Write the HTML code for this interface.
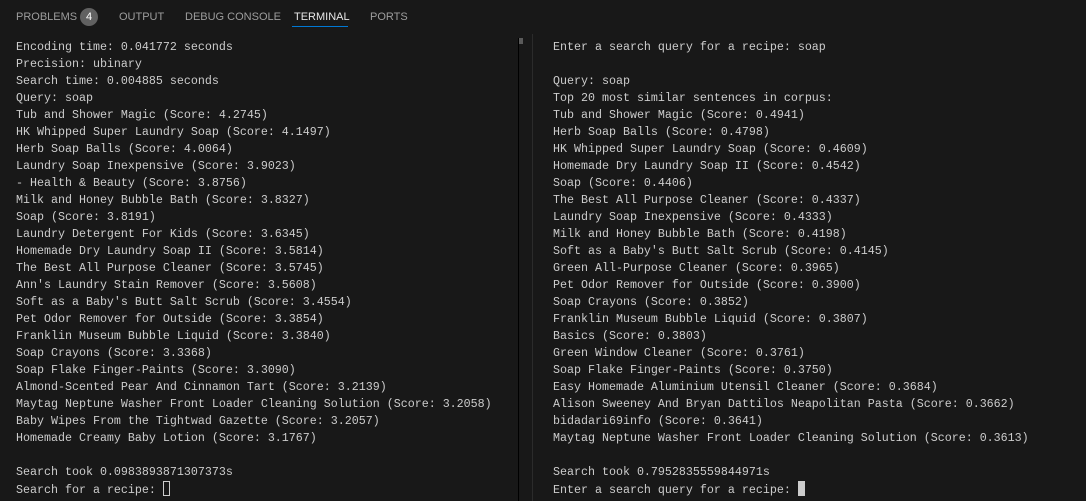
<!DOCTYPE html>
<html><head><meta charset="utf-8"><style>
body{margin:0;width:1086px;height:501px;background:#181818;overflow:hidden;font-family:"Liberation Sans",sans-serif;position:relative}
.tabs{position:absolute;top:0;left:0;height:34px;width:100%}
.tab{position:absolute;top:11px;font-size:11px;color:#9d9d9d;letter-spacing:0}
.badge{position:absolute;top:8px;left:80px;width:18px;height:18px;border-radius:9px;background:#616161;color:#fff;font-size:11px;text-align:center;line-height:18px}
.act{color:#e7e7e7}
.ul{position:absolute;left:292px;top:26px;width:56px;height:1px;background:#0078d4}
pre{position:absolute;margin:0;font-family:"Liberation Mono",monospace;font-size:11.67px;line-height:17px;color:#cccccc}
.cur{display:inline-block;width:7px;height:15px;vertical-align:-3px;box-sizing:border-box}
</style></head><body>
<div class="tabs">
<span class="tab" style="left:16px">PROBLEMS</span><span class="badge">4</span>
<span class="tab" style="left:119px">OUTPUT</span>
<span class="tab" style="left:185px">DEBUG CONSOLE</span>
<span class="tab act" style="left:294px">TERMINAL</span>
<span class="tab" style="left:370px">PORTS</span>
<div class="ul"></div>
</div>
<div style="position:absolute;left:532px;top:34px;width:1px;height:467px;background:#2b2b2b"></div>
<div style="position:absolute;left:518px;top:38px;width:1px;height:463px;background:#000"></div>
<div style="position:absolute;left:519px;top:38px;width:4px;height:6px;background:#5a5a5a"></div>
<pre style="left:16px;top:39px">Encoding time: 0.041772 seconds
Precision: ubinary
Search time: 0.004885 seconds
Query: soap
Tub and Shower Magic (Score: 4.2745)
HK Whipped Super Laundry Soap (Score: 4.1497)
Herb Soap Balls (Score: 4.0064)
Laundry Soap Inexpensive (Score: 3.9023)
- Health &amp; Beauty (Score: 3.8756)
Milk and Honey Bubble Bath (Score: 3.8327)
Soap (Score: 3.8191)
Laundry Detergent For Kids (Score: 3.6345)
Homemade Dry Laundry Soap II (Score: 3.5814)
The Best All Purpose Cleaner (Score: 3.5745)
Ann's Laundry Stain Remover (Score: 3.5608)
Soft as a Baby's Butt Salt Scrub (Score: 3.4554)
Pet Odor Remover for Outside (Score: 3.3854)
Franklin Museum Bubble Liquid (Score: 3.3840)
Soap Crayons (Score: 3.3368)
Soap Flake Finger-Paints (Score: 3.3090)
Almond-Scented Pear And Cinnamon Tart (Score: 3.2139)
Maytag Neptune Washer Front Loader Cleaning Solution (Score: 3.2058)
Baby Wipes From the Tightwad Gazette (Score: 3.2057)
Homemade Creamy Baby Lotion (Score: 3.1767)

Search took 0.0983893871307373s
Search for a recipe: <span class="cur" style="border:1px solid #cccccc"></span></pre>
<pre style="left:553px;top:39px">Enter a search query for a recipe: soap

Query: soap
Top 20 most similar sentences in corpus:
Tub and Shower Magic (Score: 0.4941)
Herb Soap Balls (Score: 0.4798)
HK Whipped Super Laundry Soap (Score: 0.4609)
Homemade Dry Laundry Soap II (Score: 0.4542)
Soap (Score: 0.4406)
The Best All Purpose Cleaner (Score: 0.4337)
Laundry Soap Inexpensive (Score: 0.4333)
Milk and Honey Bubble Bath (Score: 0.4198)
Soft as a Baby's Butt Salt Scrub (Score: 0.4145)
Green All-Purpose Cleaner (Score: 0.3965)
Pet Odor Remover for Outside (Score: 0.3900)
Soap Crayons (Score: 0.3852)
Franklin Museum Bubble Liquid (Score: 0.3807)
Basics (Score: 0.3803)
Green Window Cleaner (Score: 0.3761)
Soap Flake Finger-Paints (Score: 0.3750)
Easy Homemade Aluminium Utensil Cleaner (Score: 0.3684)
Alison Sweeney And Bryan Dattilos Neapolitan Pasta (Score: 0.3662)
bidadari69info (Score: 0.3641)
Maytag Neptune Washer Front Loader Cleaning Solution (Score: 0.3613)

Search took 0.7952835559844971s
Enter a search query for a recipe: <span class="cur" style="background:#cccccc"></span></pre>
</body></html>
